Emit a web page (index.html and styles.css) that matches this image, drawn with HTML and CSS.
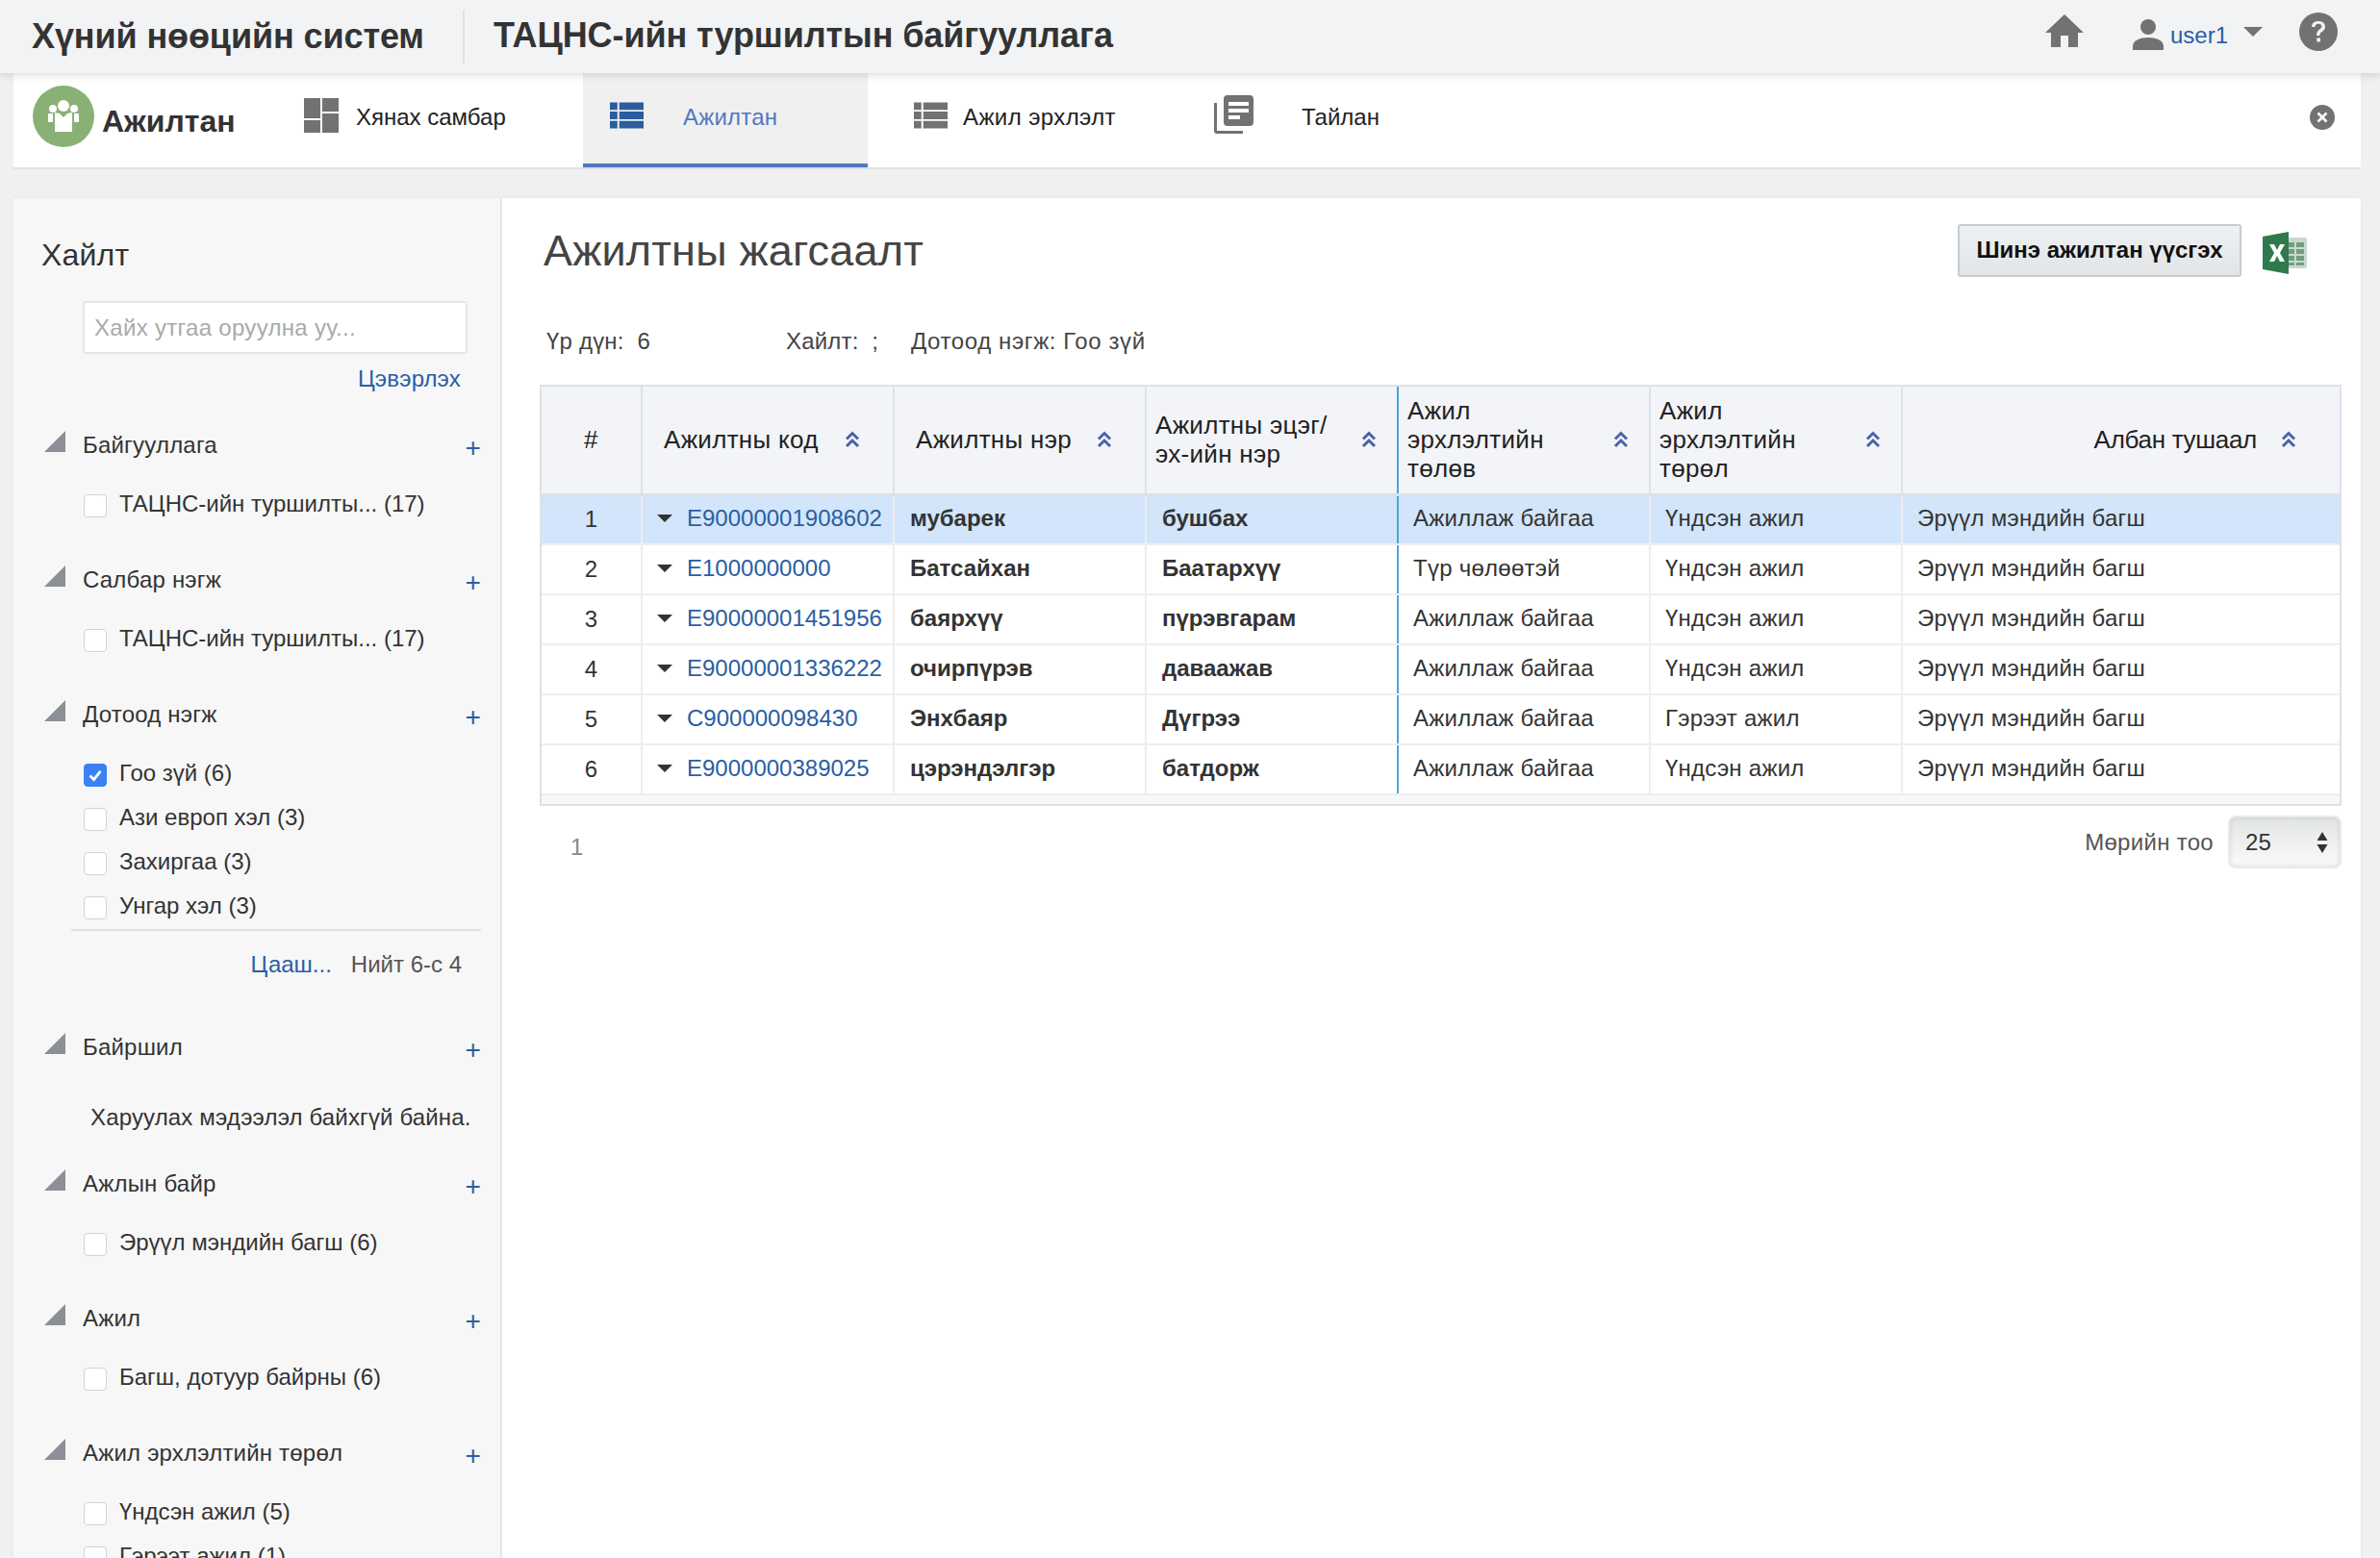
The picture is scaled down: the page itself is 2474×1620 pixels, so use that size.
FILE: index.html
```html
<!DOCTYPE html>
<html lang="mn">
  <head>
    <meta charset="UTF-8" />
    <meta name="viewport" content="width=device-width, initial-scale=1.0" />
    <title>Ажилтан</title>
    <link rel="stylesheet" href="styles.css">
  </head>
  <body>
    <svg class="defs" width="0" height="0">
      <symbol id="sort" viewBox="0 0 16 18">
        <path d="M2 8.500l6-6 6 6 M2 16l6-6 6 6" fill="none" stroke="#4a63a8" stroke-width="3" />
      </symbol>
      <symbol id="list" viewBox="0 0 36 28">
        <path d="M0 0h8v8H0z M10 0h26v8H10z M0 10h8v8H0z M10 10h26v8H10z M0 20h8v8H0z M10 20h26v8H10z" />
      </symbol>
    </svg>

    <header class="topbar">
      <div class="app-name">Хүний нөөцийн систем</div>
      <div class="org-name">ТАЦНС-ийн туршилтын байгууллага</div>
      <div class="top-actions">
        <svg class="home-icon" viewBox="0 0 40 34"><path d="M20 0L40 19h-6v15H24V22h-8v12H6V19H0z" /></svg>
        <svg class="user-icon" viewBox="0 0 32 32"><circle cx="16" cy="8" r="8" /><path d="M0 32v-4c0-6 8-9 16-9s16 3 16 9v4z" /></svg>
        <a class="user-name" href="#">user1</a>
        <span class="user-caret"></span>
        <svg class="help-icon" viewBox="0 0 40 40">
          <circle cx="20" cy="20" r="20" fill="#707372" />
          <path d="M13 15c0-4 3-6 7-6s7 2 7 6c0 3-2 4-4 5.500-1 .8-1.500 1.500-1.500 3.500h-3.500c0-3 .7-4.500 2.500-6 1.500-1.200 3-2 3-3.500 0-1.700-1.500-2.800-3.500-2.800s-3.500 1.100-3.500 3.300z M18.300 26.500h3.700v4h-3.700z" fill="#f2f3f5" />
        </svg>
      </div>
    </header>

    <nav class="tabbar">
      <div class="module">
        <svg class="module-logo" viewBox="0 0 64 64">
          <circle cx="32" cy="32" r="32" fill="#8ab175" />
          <g fill="#fff">
            <circle cx="32" cy="21" r="6" /><circle cx="21" cy="24" r="4" /><circle cx="43" cy="24" r="4" />
            <path d="M16 29h5v9h-5z M43 29h5v9h-5z M23 28l5 1 4 4 4-4 5-1v20H23z" />
          </g>
        </svg>
        <span>Ажилтан</span>
      </div>
      <a class="tab tab-dash" href="#">
        <svg class="tab-icon" viewBox="0 0 36 36"><path d="M0 0h17v21H0z M19 0h17v14H19z M0 23h17v13H0z M19 16h17v20H19z" /></svg>
        Хянах самбар
      </a>
      <a class="tab tab-active" href="#">
        <svg class="tab-icon list-icon"><use href="#list" /></svg>
        Ажилтан
      </a>
      <a class="tab tab-work" href="#">
        <svg class="tab-icon list-icon"><use href="#list" /></svg>
        Ажил эрхлэлт
      </a>
      <a class="tab tab-report" href="#">
        <svg class="report-icon" viewBox="0 0 41 40">
          <path d="M14 0h23a4 4 0 0 1 4 4v24a4 4 0 0 1-4 4H14a4 4 0 0 1-4-4V4a4 4 0 0 1 4-4z" />
          <path d="M15 7h21v4H15z M15 14h21v4H15z M15 21h12v4H15z" fill="#fff" />
          <path d="M0 8h3v29h27v3H3a3 3 0 0 1-3-3z" />
        </svg>
        Тайлан
      </a>
      <svg class="close-icon" viewBox="0 0 26 26">
        <circle cx="13" cy="13" r="13" fill="#707372" />
        <path d="M8.500 8.500l9 9 M17.500 8.500l-9 9" stroke="#fff" stroke-width="2.600" />
      </svg>
    </nav>

    <div class="content">
      <aside class="sidebar">
        <h2 class="side-title">Хайлт</h2>
        <input class="search" type="text" placeholder="Хайх утгаа оруулна уу..." />
        <div class="clear-row"><a href="#">Цэвэрлэх</a></div>

        <section class="filter">
          <div class="filter-head"><i class="grip"></i><span>Байгууллага</span><b class="plus">+</b></div>
          <label class="option"><i class="check"></i>ТАЦНС-ийн туршилты... (17)</label>
        </section>

        <section class="filter">
          <div class="filter-head"><i class="grip"></i><span>Салбар нэгж</span><b class="plus">+</b></div>
          <label class="option"><i class="check"></i>ТАЦНС-ийн туршилты... (17)</label>
        </section>

        <section class="filter filter-more">
          <div class="filter-head"><i class="grip"></i><span>Дотоод нэгж</span><b class="plus">+</b></div>
          <label class="option">
            <i class="check checked"><svg viewBox="0 0 24 24"><path d="M6 12.500l4.500 4.500L18 7.500" fill="none" stroke="#fff" stroke-width="3" /></svg></i>Гоо зүй (6)
          </label>
          <label class="option"><i class="check"></i>Ази европ хэл (3)</label>
          <label class="option"><i class="check"></i>Захиргаа (3)</label>
          <label class="option"><i class="check"></i>Унгар хэл (3)</label>
          <div class="more-row"><a href="#">Цааш...</a><span>Нийт 6-с 4</span></div>
        </section>

        <section class="filter filter-empty">
          <div class="filter-head"><i class="grip"></i><span>Байршил</span><b class="plus">+</b></div>
          <p class="no-data">Харуулах мэдээлэл байхгүй байна.</p>
        </section>

        <section class="filter">
          <div class="filter-head"><i class="grip"></i><span>Ажлын байр</span><b class="plus">+</b></div>
          <label class="option"><i class="check"></i>Эрүүл мэндийн багш (6)</label>
        </section>

        <section class="filter">
          <div class="filter-head"><i class="grip"></i><span>Ажил</span><b class="plus">+</b></div>
          <label class="option"><i class="check"></i>Багш, дотуур байрны (6)</label>
        </section>

        <section class="filter">
          <div class="filter-head"><i class="grip"></i><span>Ажил эрхлэлтийн төрөл</span><b class="plus">+</b></div>
          <label class="option"><i class="check"></i>Үндсэн ажил (5)</label>
          <label class="option"><i class="check"></i>Гэрээт ажил (1)</label>
        </section>
      </aside>

      <main class="main">
        <div class="main-head">
          <h1>Ажилтны жагсаалт</h1>
          <button class="new-btn" type="button">Шинэ ажилтан үүсгэх</button>
          <svg class="excel-icon" viewBox="0 0 46 44">
            <path d="M20 6h24a2 2 0 0 1 2 2v28a2 2 0 0 1-2 2H20z" fill="#c9d8cc" />
            <path d="M25 11h8v5h-8z M35 11h8v5h-8z M25 18h8v5h-8z M35 18h8v5h-8z M25 25h8v5h-8z M35 25h8v5h-8z M25 32h8v3h-8z M35 32h8v3h-8z" fill="#6f9f80" />
            <path d="M0 5L27 0v44L0 39z" fill="#2f7a4c" />
            <path d="M7 13h5l3 6 3-6h5l-5 9 5 9h-5l-3-6-3 6H7l5-9z" fill="#fff" />
          </svg>
        </div>

        <div class="summary">
          <span class="sum-count">Үр дүн:&nbsp; 6</span>
          <span class="sum-search">Хайлт: &nbsp;;</span>
          <span class="sum-unit">Дотоод нэгж: Гоо зүй</span>
        </div>

        <div class="table-wrap">
          <table class="grid">
            <colgroup>
              <col class="col-num" /><col class="col-w" /><col class="col-w" /><col class="col-w" /><col class="col-w" /><col class="col-w" /><col />
            </colgroup>
            <thead>
              <tr>
                <th class="num">#</th>
                <th><div class="th-in th-center"><span>Ажилтны код</span><svg class="sort"><use href="#sort" /></svg></div></th>
                <th><div class="th-in th-center"><span>Ажилтны нэр</span><svg class="sort"><use href="#sort" /></svg></div></th>
                <th><div class="th-in"><span>Ажилтны эцэг/<br />эх-ийн нэр</span><svg class="sort"><use href="#sort" /></svg></div></th>
                <th class="frozen"><div class="th-in"><span>Ажил<br />эрхлэлтийн<br />төлөв</span><svg class="sort"><use href="#sort" /></svg></div></th>
                <th><div class="th-in"><span>Ажил<br />эрхлэлтийн<br />төрөл</span><svg class="sort"><use href="#sort" /></svg></div></th>
                <th><div class="th-in th-right"><span>Албан тушаал</span><svg class="sort"><use href="#sort" /></svg></div></th>
              </tr>
            </thead>
            <tbody>
              <tr class="selected">
                <td class="num">1</td>
                <td class="code"><i class="row-caret"></i><a href="#">E90000001908602</a></td>
                <td class="strong">мубарек</td>
                <td class="strong">бушбах</td>
                <td class="frozen">Ажиллаж байгаа</td>
                <td>Үндсэн ажил</td>
                <td>Эрүүл мэндийн багш</td>
              </tr>
              <tr>
                <td class="num">2</td>
                <td class="code"><i class="row-caret"></i><a href="#">E1000000000</a></td>
                <td class="strong">Батсайхан</td>
                <td class="strong">Баатархүү</td>
                <td class="frozen">Түр чөлөөтэй</td>
                <td>Үндсэн ажил</td>
                <td>Эрүүл мэндийн багш</td>
              </tr>
              <tr>
                <td class="num">3</td>
                <td class="code"><i class="row-caret"></i><a href="#">E90000001451956</a></td>
                <td class="strong">баярхүү</td>
                <td class="strong">пүрэвгарам</td>
                <td class="frozen">Ажиллаж байгаа</td>
                <td>Үндсэн ажил</td>
                <td>Эрүүл мэндийн багш</td>
              </tr>
              <tr>
                <td class="num">4</td>
                <td class="code"><i class="row-caret"></i><a href="#">E90000001336222</a></td>
                <td class="strong">очирпүрэв</td>
                <td class="strong">даваажав</td>
                <td class="frozen">Ажиллаж байгаа</td>
                <td>Үндсэн ажил</td>
                <td>Эрүүл мэндийн багш</td>
              </tr>
              <tr>
                <td class="num">5</td>
                <td class="code"><i class="row-caret"></i><a href="#">C900000098430</a></td>
                <td class="strong">Энхбаяр</td>
                <td class="strong">Дүгрээ</td>
                <td class="frozen">Ажиллаж байгаа</td>
                <td>Гэрээт ажил</td>
                <td>Эрүүл мэндийн багш</td>
              </tr>
              <tr>
                <td class="num">6</td>
                <td class="code"><i class="row-caret"></i><a href="#">E9000000389025</a></td>
                <td class="strong">цэрэндэлгэр</td>
                <td class="strong">батдорж</td>
                <td class="frozen">Ажиллаж байгаа</td>
                <td>Үндсэн ажил</td>
                <td>Эрүүл мэндийн багш</td>
              </tr>
            </tbody>
          </table>
          <div class="table-foot"></div>
        </div>

        <div class="pager">
          <span class="page-no">1</span>
          <span class="page-label">Мөрийн тоо</span>
          <div class="page-select">
            <span>25</span>
            <svg viewBox="0 0 12 24"><path d="M6 1l5.500 9H.5z M6 23L.5 14h11z" fill="#333" /></svg>
          </div>
        </div>
      </main>
    </div>
  </body>
</html>
```

FILE: styles.css
```css
* {
  box-sizing: border-box;
}
html,
body {
  height: 100%;
}
body {
  margin: 0;
  height: 1620px;
  overflow: hidden;
  background: #f0f0f0;
  color: #333;
  font-family: "Liberation Sans", Arial, sans-serif;
  font-size: 24px;
  letter-spacing: 0.2px;
  display: flex;
  flex-direction: column;
}
a {
  color: #2b5ea3;
  text-decoration: none;
}
.defs {
  position: absolute;
}

/* top bar */
.topbar {
  height: 76px;
  flex: none;
  display: flex;
  align-items: center;
  padding-left: 33px;
  background: #f2f3f5;
  box-shadow: 0 2px 8px rgba(0, 0, 0, 0.14);
  position: relative;
  z-index: 2;
}
.app-name,
.org-name {
  font-size: 36px;
  font-weight: bold;
  letter-spacing: -0.1px;
  color: #333;
  white-space: nowrap;
}
.app-name {
  width: 450px;
  height: 56px;
  line-height: 56px;
  border-right: 2px solid #dfe1e4;
}
.org-name {
  margin-left: 30px;
  margin-bottom: 2px;
}
.top-actions {
  margin-left: auto;
  display: flex;
  align-items: center;
  fill: #707372;
  padding-right: 44px;
}
.home-icon {
  width: 40px;
  height: 34px;
  margin-bottom: 13px;
}
.user-icon {
  width: 32px;
  height: 32px;
  margin-left: 51px;
  margin-bottom: 4px;
}
.user-name {
  margin-left: 7px;
  margin-bottom: 2px;
  letter-spacing: 0;
}
.user-caret {
  width: 0;
  height: 0;
  margin-left: 16px;
  margin-bottom: 10px;
  border-left: 10px solid transparent;
  border-right: 10px solid transparent;
  border-top: 10px solid #707372;
}
.help-icon {
  width: 40px;
  height: 40px;
  margin-left: 38px;
  margin-bottom: 10px;
}

/* module tabs */
.tabbar {
  height: 100px;
  flex: none;
  margin: 0 20px 0 14px;
  display: flex;
  align-items: stretch;
  background: #fff;
  border-bottom: 2px solid #dce2e6;
  position: relative;
  fill: #707372;
}
.module {
  width: 302px;
  display: flex;
  align-items: center;
  gap: 8px;
  padding: 0 0 8px 20px;
  font-size: 32px;
  font-weight: bold;
  letter-spacing: 0;
  color: #333;
}
.module-logo {
  width: 64px;
  height: 64px;
  flex: none;
}
.module span {
  margin-top: 10px;
}
.tab {
  display: flex;
  align-items: center;
  color: #222;
  padding-bottom: 6px;
}
.tab-icon {
  flex: none;
}
.tab-dash {
  width: 290px;
  gap: 18px;
  letter-spacing: 0;
}
.tab-dash .tab-icon {
  width: 36px;
  height: 36px;
  margin-bottom: 4px;
}
.list-icon {
  width: 35px;
  height: 28px;
  margin-bottom: 4px;
}
.tab-active {
  width: 296px;
  padding-left: 28px;
  gap: 41px;
  color: #4f79c0;
  fill: #2b5c9e;
  background: #f0f0f0;
  border-bottom: 4px solid #4f79c0;
  padding-bottom: 2px;
}
.tab-work {
  margin-left: 48px;
  width: 312px;
  gap: 16px;
  letter-spacing: 0.4px;
}
.report-icon {
  width: 41px;
  height: 40px;
  flex: none;
  margin-bottom: 6px;
}
.tab-report {
  gap: 50px;
  letter-spacing: 0;
}
.close-icon {
  width: 26px;
  height: 26px;
  margin: 33px 27px 0 auto;
}

/* left filters */
.content {
  flex: 1;
  min-height: 0;
  display: flex;
  gap: 2px;
  padding: 30px 20px 0 14px;
}
.sidebar {
  width: 506px;
  flex: none;
  overflow: hidden;
  background: #f7f7f7;
  padding: 37px 32px 0 30px;
  box-shadow: 0 0 4px rgba(0, 0, 0, 0.06);
}
.side-title {
  margin: 0 0 0 -1px;
  font-size: 32px;
  line-height: 44px;
  font-weight: normal;
  color: #333;
}
.search {
  display: block;
  width: 400px;
  height: 55px;
  margin: 26px 0 0 42px;
  padding: 0 10px;
  border: 2px solid #e2e6ea;
  border-radius: 3px;
  background: #fff;
  letter-spacing: 0.3px;
  font: 24px "Liberation Sans", Arial, sans-serif;
}
.search::placeholder {
  color: #aaa;
}
.clear-row {
  text-align: right;
  line-height: 30px;
  margin-top: 11px;
  padding-right: 9px;
  height: 30px;
}
.filter {
  margin-bottom: 32px;
}
.clear-row + .filter {
  margin-top: 31px;
}
.filter-head {
  display: flex;
  align-items: center;
  height: 46px;
  margin-bottom: 16px;
  color: #333;
}
.grip {
  width: 0;
  height: 0;
  margin: -8px 18px 0 2px;
  border-bottom: 22px solid #8c9096;
  border-left: 22px solid transparent;
}
.plus {
  margin-left: auto;
  margin-right: -12px;
  padding-top: 5px;
  color: #2b5ea3;
  font-size: 28px;
  font-weight: normal;
}
.option {
  display: flex;
  align-items: center;
  height: 46px;
  margin-left: 43px;
  padding-bottom: 2px;
  gap: 13px;
  letter-spacing: 0;
  white-space: nowrap;
}
.check {
  width: 24px;
  height: 24px;
  flex: none;
  margin-top: 4px;
  background: #fff;
  border: 1px solid #d3d3d3;
  border-radius: 4px;
}
.checked {
  background: #3a81f3;
  border-color: #3a81f3;
  display: block;
}
.checked svg {
  display: block;
  width: 22px;
  height: 22px;
}
.filter-more .more-row {
  margin: 0 -12px 0 30px;
  border-top: 2px solid #dce2e8;
  height: 72px;
  display: flex;
  align-items: center;
  justify-content: flex-end;
  gap: 20px;
  padding-right: 20px;
  letter-spacing: 0;
}
.filter-more {
  margin-bottom: 28px;
}
.more-row span {
  color: #555;
}
.filter-empty .filter-head {
  margin-bottom: 27px;
}
.filter-empty {
  margin-bottom: 23px;
}
.no-data {
  margin: 0 0 0 50px;
  line-height: 46px;
  letter-spacing: 0.15px;
  white-space: nowrap;
}

/* main list */
.main {
  flex: 1;
  min-width: 0;
  background: #fff;
  padding: 0 20px 0 39px;
  box-shadow: 0 0 4px rgba(0, 0, 0, 0.06);
}
.main-head {
  display: flex;
  align-items: center;
  height: 85px;
  padding-top: 24px;
}
.main-head h1 {
  margin: 0 auto 0 4px;
  font-size: 45px;
  font-weight: normal;
  letter-spacing: 0.2px;
  color: #444;
}
.new-btn {
  width: 295px;
  height: 55px;
  padding: 0 0 2px;
  border: 2px solid #c5ccd2;
  border-radius: 3px;
  background: linear-gradient(#eef0f2, #e2e5e8);
  color: #111;
  font: bold 24px "Liberation Sans", Arial, sans-serif;
}
.excel-icon {
  width: 46px;
  height: 44px;
  margin: 4px 36px 0 22px;
  flex: none;
}
.summary {
  display: flex;
  align-items: center;
  height: 30px;
  margin-top: 49px;
  color: #444;
  white-space: nowrap;
}
.sum-count {
  margin-left: 7px;
  width: 249px;
}
.sum-search {
  width: 130px;
}
.sum-unit {
  letter-spacing: 0.6px;
}
.table-wrap {
  margin-top: 30px;
  border: 2px solid #dce2e8;
  height: 438px;
  display: flex;
  flex-direction: column;
}
.table-foot {
  flex: 1;
  background: #f5f7fb;
}
.grid {
  width: 100%;
  table-layout: fixed;
  border-collapse: collapse;
}
.col-num {
  width: 104px;
}
.col-w {
  width: 262px;
}
.grid th,
.grid td {
  border-left: 2px solid #eee;
  border-bottom: 2px solid #eee;
  padding: 0;
}
.grid th:first-child,
.grid td:first-child {
  border-left: 0;
}
.grid th {
  height: 112px;
  background: #f2f4f7;
  border-left-color: #dce2e8;
  border-bottom: 3px solid #dce2e8;
  font-size: 26px;
  line-height: 30px;
  font-weight: normal;
  letter-spacing: 0.3px;
  text-align: left;
  color: #222;
}
.grid td {
  height: 52px;
  padding: 0 10px 2px 15px;
  white-space: nowrap;
  letter-spacing: 0.25px;
  color: #333;
}
.grid .frozen {
  border-left: 2px solid #4aa8d6;
}
.grid .num {
  padding: 0;
  text-align: center;
}
.th-in {
  display: flex;
  align-items: center;
  justify-content: space-between;
  padding: 0 21px 0 9px;
}
.th-center {
  padding: 0 34px 0 22px;
}
.th-right {
  justify-content: flex-end;
  gap: 25px;
  padding-right: 45px;
  letter-spacing: -0.3px;
}
.sort {
  width: 16px;
  height: 18px;
  flex: none;
}
.grid td.strong {
  padding-left: 16px;
  font-weight: bold;
  letter-spacing: 0;
}
.grid td.code {
  padding-left: 15px;
  letter-spacing: 0;
}
.row-caret {
  display: inline-block;
  width: 0;
  height: 0;
  margin-right: 15px;
  vertical-align: 4px;
  border-left: 8px solid transparent;
  border-right: 8px solid transparent;
  border-top: 8px solid #333;
}
.selected td {
  background: #d2e5fa;
}
.pager {
  display: flex;
  align-items: center;
  height: 55px;
  margin-top: 10px;
  color: #555;
}
.page-no {
  margin: 10px auto 0 32px;
  color: #888;
}
.page-label {
  margin-right: 15px;
  letter-spacing: 0.3px;
}
.page-select {
  width: 118px;
  height: 55px;
  display: flex;
  align-items: center;
  justify-content: space-between;
  padding: 0 12px 0 16px;
  border: 2px solid #e8eaea;
  border-radius: 8px;
  background: linear-gradient(#e3e5e5, #fafafa);
  box-shadow: inset 0 0 5px rgba(0, 0, 0, 0.12);
  color: #333;
}
.page-select svg {
  width: 12px;
  height: 24px;
}
```
